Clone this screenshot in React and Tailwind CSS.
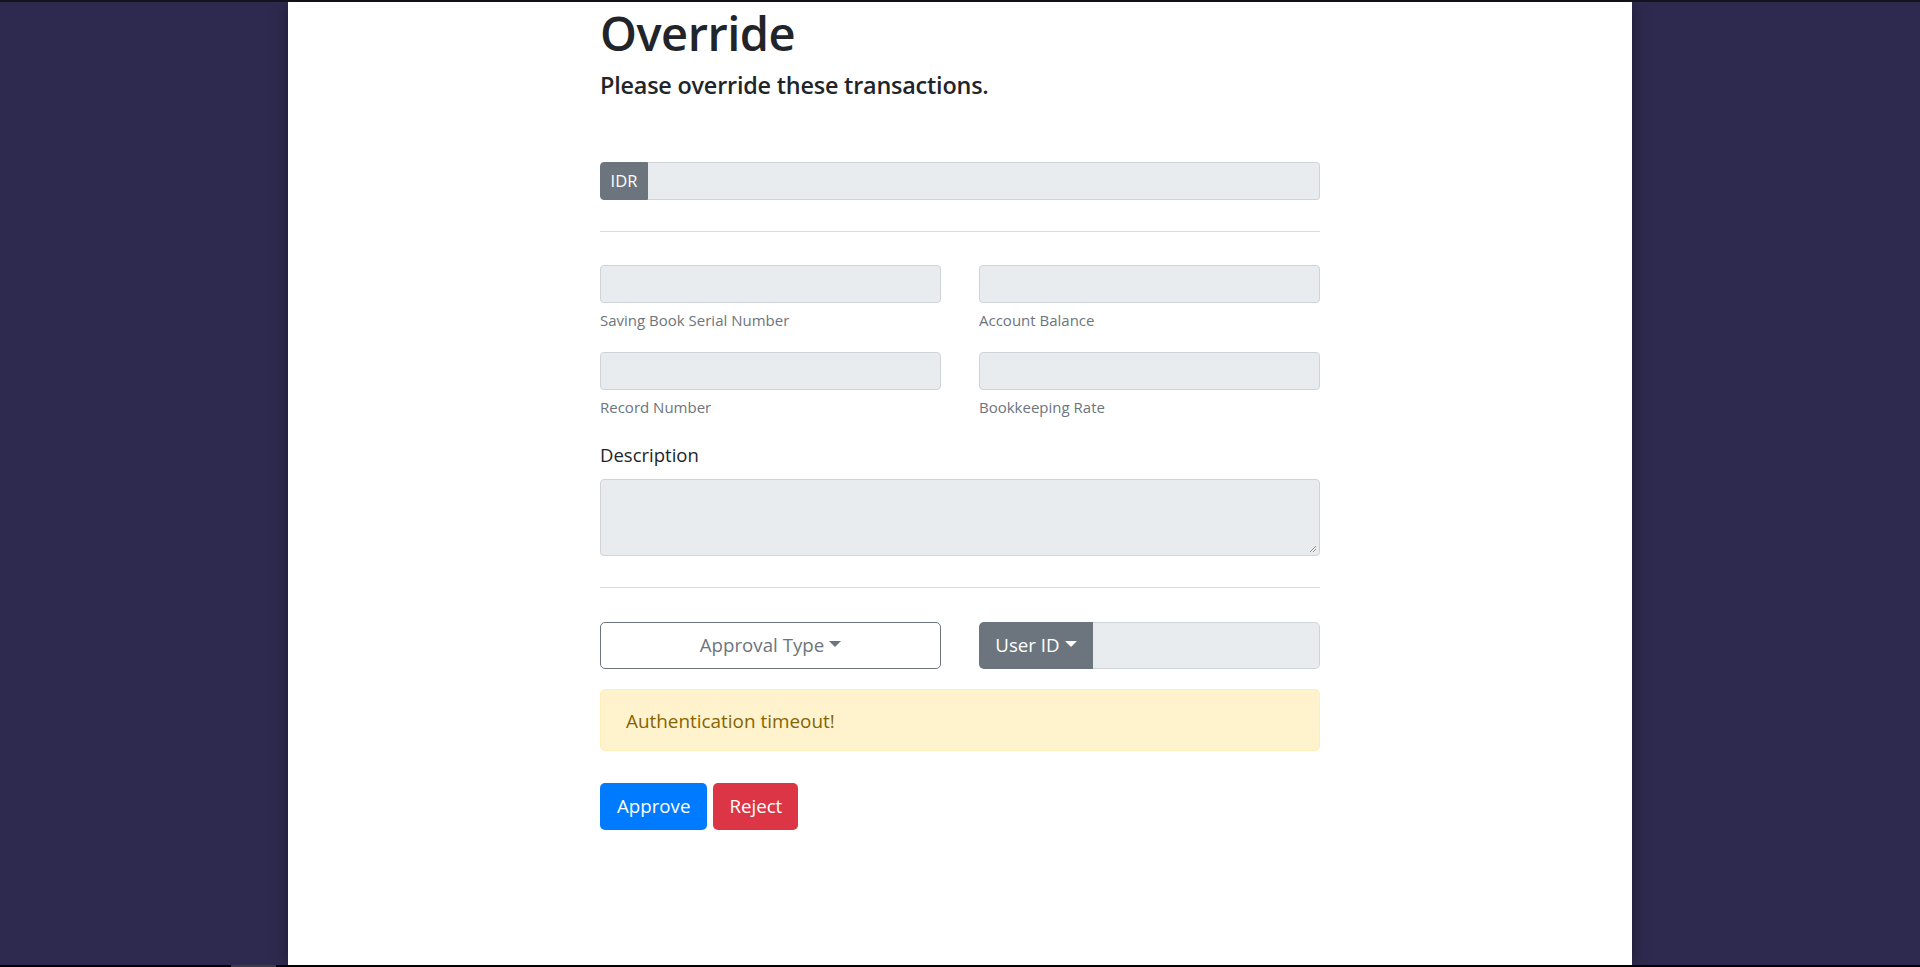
import React from "react";

function Caret() {
  return (
    <span className="inline-block ml-[5px] align-middle w-0 h-0 border-t-[6px] border-t-current border-x-[6px] border-x-transparent translate-y-[-2px]" />
  );
}

export default function App() {
  const font = { fontFamily: '"Open Sans", "Noto Sans", Arial, sans-serif' };
  return (
    <div className="h-[967px] w-full flex flex-col bg-[#2e2a4f] overflow-hidden" style={font}>
      <div className="h-[2px] w-full bg-[#14141e] shrink-0" />
      <div className="flex-1 flex justify-center min-h-0">
        <div className="w-[1344px] bg-white shadow-[0_0_14px_rgba(0,0,0,0.35)] flex justify-center">
          <div className="w-[720px] flex flex-col">
            <h1 className="pt-[3px] text-[47px] leading-[56px] font-semibold text-[#212529] tracking-[-0.5px]">
              Override
            </h1>
            <h5 className="mt-[8px] text-[23.4px] leading-[32px] font-semibold text-[#212529] tracking-[-0.2px]">
              Please override these transactions.
            </h5>

            <div className="mt-[61px] h-[38px] flex">
              <div className="w-[48px] flex items-center justify-center bg-[#6c757d] text-white text-[16.5px] rounded-l-[4px] border border-[#6c757d]">
                IDR
              </div>
              <div className="flex-1 bg-[#e9ecef] border border-[#ced4da] border-l-0 rounded-r-[4px]" />
            </div>

            <div className="mt-[31px] h-px bg-[#dadada]" />

            <div className="mt-[33px] grid grid-cols-2 gap-x-[38px] gap-y-[22px]">
              {[
                "Saving Book Serial Number",
                "Account Balance",
                "Record Number",
                "Bookkeeping Rate",
              ].map((label) => (
                <div key={label} className="flex flex-col">
                  <div className="h-[38px] bg-[#e9ecef] border border-[#ced4da] rounded-[4px]" />
                  <div className="mt-[7px] text-[15px] leading-[20px] text-[#6c757d]">{label}</div>
                </div>
              ))}
            </div>

            <div className="mt-[25px] text-[18.5px] leading-[26px] text-[#212529]">Description</div>
            <div className="mt-[11px] h-[77px] bg-[#e9ecef] border border-[#ced4da] rounded-[4px] relative">
              <svg className="absolute right-[2px] bottom-[2px]" width="8" height="8" viewBox="0 0 8 8">
                <path d="M7 1 L1 7 M7 4 L4 7" stroke="#8a8a8a" strokeWidth="0.9" fill="none" />
              </svg>
            </div>

            <div className="mt-[31px] h-px bg-[#dadada]" />

            <div className="mt-[34px] grid grid-cols-2 gap-x-[38px]">
              <div className="h-[47px] border border-[#6c757d] rounded-[5px] bg-white flex items-center justify-center text-[18.7px] text-[#6c757d]">
                <span>Approval Type</span>
                <Caret />
              </div>
              <div className="h-[47px] flex">
                <div className="w-[114px] bg-[#6c757d] text-white rounded-l-[5px] flex items-center justify-center text-[18.7px]">
                  <span>User ID</span>
                  <Caret />
                </div>
                <div className="flex-1 bg-[#e9ecef] border border-[#ced4da] border-l-0 rounded-r-[5px]" />
              </div>
            </div>

            <div className="mt-[20px] h-[62px] bg-[#fff3cd] border border-[#ffeeba] rounded-[5px] pl-[25px] flex items-center text-[18.9px] text-[#856404] pt-[2px]">
              Authentication timeout!
            </div>

            <div className="mt-[32px] flex gap-[6px]">
              <div className="h-[47px] px-[17px] rounded-[5px] bg-[#007bff] text-white flex items-center text-[18.7px]">
                Approve
              </div>
              <div className="h-[47px] px-[16px] rounded-[5px] bg-[#dc3545] text-white flex items-center text-[18.7px]">
                Reject
              </div>
            </div>
          </div>
        </div>
      </div>
      <div className="h-[2px] w-full bg-black shrink-0 flex">
        <div className="ml-[231px] w-[45px] bg-[#3b3b45]" />
      </div>
    </div>
  );
}
